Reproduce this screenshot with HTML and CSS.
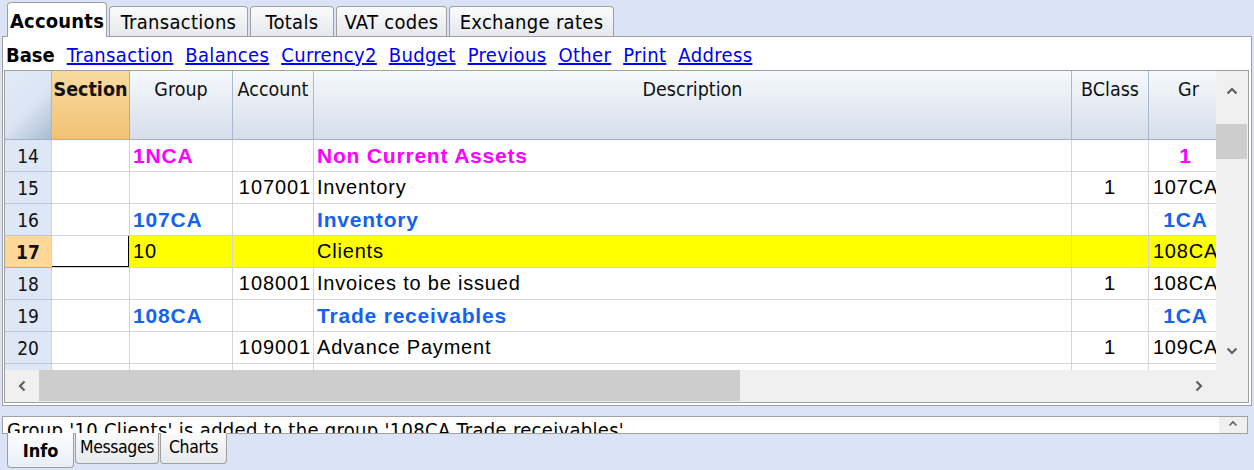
FILE: index.html
```html
<!DOCTYPE html>
<html>
<head>
<meta charset="utf-8">
<link rel="stylesheet" href="styles.css">
</head>
<body>
<div class="app">
  <div class="toptabs">
    <div class="tab tab-accounts active">Accounts</div>
    <div class="tab tab-transactions">Transactions</div>
    <div class="tab tab-totals">Totals</div>
    <div class="tab tab-vat">VAT codes</div>
    <div class="tab tab-rates">Exchange rates</div>
  </div>

  <div class="panel">
    <div class="subtabs">
      <span class="subtab current">Base</span>
      <a class="subtab">Transaction</a>
      <a class="subtab">Balances</a>
      <a class="subtab">Currency2</a>
      <a class="subtab">Budget</a>
      <a class="subtab">Previous</a>
      <a class="subtab">Other</a>
      <a class="subtab">Print</a>
      <a class="subtab">Address</a>
    </div>

    <div class="gridframe">
      <div class="gridmain">
        <div class="viewport">
          <div class="row head">
            <div class="c rn corner"></div>
            <div class="c hsel">Section</div>
            <div class="c">Group</div>
            <div class="c">Account</div>
            <div class="c">Description</div>
            <div class="c">BClass</div>
            <div class="c">Gr</div>
          </div>

          <div class="row">
            <div class="c rn">14</div>
            <div class="c"></div>
            <div class="c l b mag">1NCA</div>
            <div class="c"></div>
            <div class="c l b mag">Non Current Assets</div>
            <div class="c"></div>
            <div class="c m b mag">1</div>
          </div>

          <div class="row">
            <div class="c rn">15</div>
            <div class="c"></div>
            <div class="c l"></div>
            <div class="c r">107001</div>
            <div class="c l">Inventory</div>
            <div class="c m">1</div>
            <div class="c m">107CA</div>
          </div>

          <div class="row">
            <div class="c rn">16</div>
            <div class="c"></div>
            <div class="c l b blu">107CA</div>
            <div class="c"></div>
            <div class="c l b blu">Inventory</div>
            <div class="c"></div>
            <div class="c m b blu">1CA</div>
          </div>

          <div class="row sel">
            <div class="c rn rnsel">17</div>
            <div class="c curcell"></div>
            <div class="c l yel">10</div>
            <div class="c yel"></div>
            <div class="c l yel">Clients</div>
            <div class="c yel"></div>
            <div class="c m yel">108CA</div>
          </div>

          <div class="row">
            <div class="c rn">18</div>
            <div class="c"></div>
            <div class="c l"></div>
            <div class="c r">108001</div>
            <div class="c l">Invoices to be issued</div>
            <div class="c m">1</div>
            <div class="c m">108CA</div>
          </div>

          <div class="row">
            <div class="c rn">19</div>
            <div class="c"></div>
            <div class="c l b blu">108CA</div>
            <div class="c"></div>
            <div class="c l b blu">Trade receivables</div>
            <div class="c"></div>
            <div class="c m b blu">1CA</div>
          </div>

          <div class="row">
            <div class="c rn">20</div>
            <div class="c"></div>
            <div class="c l"></div>
            <div class="c r">109001</div>
            <div class="c l">Advance Payment</div>
            <div class="c m">1</div>
            <div class="c m">109CA</div>
          </div>

          <div class="row">
            <div class="c rn">21</div>
            <div class="c"></div>
            <div class="c l"></div>
            <div class="c r"></div>
            <div class="c l"></div>
            <div class="c m"></div>
            <div class="c m"></div>
          </div>
        </div>

        <div class="vscroll">
          <div class="sbtn vbtn">
            <svg width="12" height="8" viewBox="0 0 12 8"><polyline points="1.5,6.5 6,2 10.5,6.5" fill="none" stroke="#606060" stroke-width="2.2"/></svg>
          </div>
          <div class="vtrack"><div class="vthumb"></div></div>
          <div class="sbtn vbtn">
            <svg width="12" height="8" viewBox="0 0 12 8"><polyline points="1.5,1.5 6,6 10.5,1.5" fill="none" stroke="#606060" stroke-width="2.2"/></svg>
          </div>
        </div>
      </div>

      <div class="hscroll">
        <div class="sbtn hbtn">
          <svg width="8" height="12" viewBox="0 0 8 12"><polyline points="6.5,1.5 2,6 6.5,10.5" fill="none" stroke="#606060" stroke-width="2.2"/></svg>
        </div>
        <div class="htrack"><div class="hthumb"></div></div>
        <div class="sbtn hbtn">
          <svg width="8" height="12" viewBox="0 0 8 12"><polyline points="1.5,1.5 6,6 1.5,10.5" fill="none" stroke="#606060" stroke-width="2.2"/></svg>
        </div>
        <div class="hcorner"></div>
      </div>
    </div>
  </div>

  <div class="infobox">
    <div class="infotext">Group '10 Clients' is added to the group '108CA Trade receivables'</div>
    <div class="infoscroll">
      <svg width="10" height="7" viewBox="0 0 10 7"><polyline points="1.5,5.5 5,2 8.5,5.5" fill="none" stroke="#606060" stroke-width="1.6"/></svg>
    </div>
  </div>

  <div class="bottomtabs">
    <div class="btab btab-info active">Info</div>
    <div class="btab btab-messages">Messages</div>
    <div class="btab btab-charts">Charts</div>
  </div>
</div>
</body>
</html>
```

FILE: styles.css
```css
* { box-sizing: border-box; }

html, body {
  margin: 0;
  padding: 0;
  background: #dae4f6;
  overflow: hidden;
}

.app {
  width: 1254px;
  height: 470px;
  font-family: "DejaVu Sans Condensed", "DejaVu Sans", sans-serif;
  font-stretch: condensed;
  color: #000;
}

/* ---------- top tabs ---------- */
.toptabs {
  display: flex;
  align-items: flex-end;
  gap: 2px;
  height: 36px;
  padding-left: 7px;
  position: relative;
  z-index: 2;
}

.tab {
  height: 30px;
  border: 1px solid #a0a0a0;
  border-bottom: none;
  border-radius: 4px 4px 0 0;
  background: linear-gradient(#fbfbfb, #e6e8ec);
  font-size: 20px;
  letter-spacing: 0.3px;
  line-height: 31px;
  text-align: center;
  white-space: nowrap;
}

.tab.active {
  height: 35px;
  margin-bottom: -1px;
  background: #fff;
  font-weight: bold;
  letter-spacing: 0.2px;
  line-height: 36px;
}

.tab-accounts { width: 100px; }
.tab-transactions { width: 139px; }
.tab-totals { width: 84px; }
.tab-vat { width: 111px; }
.tab-rates { width: 165px; }

/* ---------- main panel ---------- */
.panel {
  margin-left: 2px;
  width: 1250px;
  height: 370px;
  background: #fff;
  border: 1px solid #a0a0a0;
  padding: 0 1px 2px 1px;
}

.subtabs {
  display: flex;
  gap: 12px;
  height: 33px;
  padding-left: 2px;
  font-size: 20px;
  letter-spacing: 0.35px;
  line-height: 36px;
  white-space: nowrap;
}

.subtab { color: #0000ee; text-decoration: underline; }
.subtab.current { color: #000; font-weight: bold; text-decoration: none; letter-spacing: 0; }

.gridframe {
  width: 1245px;
  border: 1px solid #a0a0a0;
}

.gridmain {
  display: flex;
  height: 299px;
}

.viewport {
  width: 1211px;
  height: 299px;
  overflow: hidden;
  background: #fff;
}

.row {
  display: grid;
  grid-template-columns: 47px 78px 103px 81px 758px 77px 80px;
  width: 1224px;
  height: 32px;
}

.c {
  border-right: 1px solid #d4d4d4;
  border-bottom: 1px solid #d4d4d4;
  font-family: "Liberation Sans", Arial, sans-serif;
  font-size: 20px;
  letter-spacing: 0.8px;
  line-height: 31px;
  white-space: nowrap;
  overflow: hidden;
  position: relative;
}

.c.l { padding-left: 3px; }
.c.r { text-align: right; padding-right: 2px; letter-spacing: 0.9px; }
.c.m { text-align: center; overflow: visible; }
.c.m:last-child { padding-right: 6px; }
.c.b { font-weight: bold; font-size: 21px; letter-spacing: 0.8px; }
.mag { color: #ff00ff; }
.blu { color: #1562f0; }
.yel { background: #ffff00; }

.c.rn {
  font-family: "DejaVu Sans Condensed", "DejaVu Sans", sans-serif;
  font-stretch: condensed;
  font-size: 19px;
  letter-spacing: 0;
  line-height: 33px;
  text-align: center;
  background: #dde7f5;
  border-bottom-color: #b8c6d8;
  border-right-color: #c9d4e2;
  color: #111;
}

.c.rnsel {
  background: #ffd899;
  border-bottom-color: #f0a040;
  font-weight: bold;
}

.curcell::after {
  content: "";
  position: absolute;
  top: -1px;
  left: -1px;
  right: 0;
  bottom: 0;
  border: 1px solid #000;
}

/* header */
.row.head { height: 69px; }

.row.head .c {
  font-family: "DejaVu Sans Condensed", "DejaVu Sans", sans-serif;
  font-stretch: condensed;
  font-size: 19.5px;
  letter-spacing: 0;
  line-height: 24px;
  padding-top: 7px;
  text-align: center;
  color: #111;
  background: linear-gradient(#f6f9fd, #d6deea);
  border-right-color: #a9b9cf;
  border-bottom-color: #9fb0c7;
}

.row.head .c.corner {
  background: linear-gradient(135deg, #e2eaf7 0%, #dae4f3 55%, #a8bbd3 100%);
  border-right-color: #a9b9cf;
}

.row.head .c.hsel {
  font-weight: bold;
  background: linear-gradient(#f8dba0, #f2c276);
  border-right-color: #f0a040;
  border-bottom-color: #f0a040;
}

/* scrollbars */
.vscroll {
  width: 32px;
  background: #f0f0f0;
  display: flex;
  flex-direction: column;
}

.sbtn {
  display: flex;
  align-items: center;
  justify-content: center;
}

.vbtn { height: 39px; }
.vtrack { flex: 1; padding-top: 14px; }
.vthumb { height: 35px; background: #cdcdcd; margin-right: 1px; }

.hscroll {
  display: flex;
  height: 32px;
  background: #f0f0f0;
}

.hbtn { width: 34px; }
.htrack { width: 1143px; }
.hthumb { width: 701px; height: 31px; background: #cdcdcd; }
.hcorner { width: 32px; background: #f0f0f0; }

/* info box */
.infobox {
  margin: 10px 0 0 2px;
  width: 1246px;
  height: 18px;
  background: #fff;
  border: 1px solid #a0a0a0;
  display: flex;
  overflow: hidden;
}

.infotext {
  flex: 1;
  height: 16px;
  padding: 5px 0 0 4px;
  font-size: 20px;
  letter-spacing: 0.3px;
  line-height: 16px;
  white-space: nowrap;
  overflow: hidden;
}

.infoscroll {
  width: 28px;
  background: #f0f0f0;
  display: flex;
  justify-content: center;
  padding-top: 3px;
}

/* bottom tabs */
.bottomtabs {
  display: flex;
  align-items: flex-start;
  gap: 1px;
  padding-left: 7px;
  margin-top: -1px;
}

.btab {
  height: 31px;
  border: 1px solid #a0a0a0;
  border-top: none;
  border-radius: 0 0 4px 4px;
  background: linear-gradient(#fbfbfb, #e6e8ec);
  font-size: 17.5px;
  letter-spacing: -0.4px;
  line-height: 28px;
  text-align: center;
  white-space: nowrap;
}

.btab.active {
  height: 35px;
  background: linear-gradient(#fdfdfe, #e9eef7);
  font-weight: bold;
  font-size: 18px;
  letter-spacing: 0;
  line-height: 36px;
}

.btab-info { width: 67px; }
.btab-messages { width: 84px; }
.btab-charts { width: 67px; }
```
